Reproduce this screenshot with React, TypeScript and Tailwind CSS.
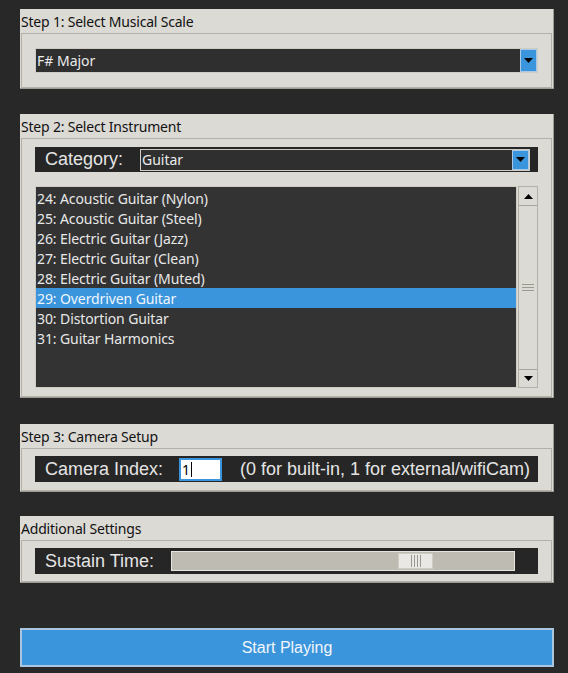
import React from 'react';

const INSTRUMENTS = [
  '24: Acoustic Guitar (Nylon)',
  '25: Acoustic Guitar (Steel)',
  '26: Electric Guitar (Jazz)',
  '27: Electric Guitar (Clean)',
  '28: Electric Guitar (Muted)',
  '29: Overdriven Guitar',
  '30: Distortion Guitar',
  '31: Guitar Harmonics',
];

const UI_FONT = "font-['Noto_Sans',sans-serif]";
const BIG_FONT = "font-['Liberation_Sans',Arial,sans-serif]";

function ArrowDown({ className = '' }: { className?: string }) {
  return (
    <svg width="9" height="5" viewBox="0 0 9 5" className={className}>
      <path d="M0 0 H9 L4.5 5 Z" fill="#000" />
    </svg>
  );
}

function ArrowUp({ className = '' }: { className?: string }) {
  return (
    <svg width="9" height="5" viewBox="0 0 9 5" className={className}>
      <path d="M0 5 H9 L4.5 0 Z" fill="#000" />
    </svg>
  );
}

function Panel({ title, children, className = '' }: { title: string; children: React.ReactNode; className?: string }) {
  return (
    <div className={`bg-[#dcdad5] border-r border-b border-[#9f9c95] ${className}`}>
      <div className={`h-[24px] flex items-center pl-[1px] text-[14px] tracking-[-0.2px] text-[#111] ${UI_FONT}`}>{title}</div>
      <div className="border border-[#b3b0a8] ml-[1px] mr-[1px]">{children}</div>
    </div>
  );
}

function Combo({ value, h }: { value: string; h: string }) {
  return (
    <div className={`flex ${h} bg-[#2f2f2f] border border-[#cfccc4]`}>
      <div className={`flex-1 flex items-center pl-[1px] text-[14px] text-[#ececec] ${UI_FONT}`}>{value}</div>
      <div className="w-[17px] bg-[#3a95dc] border border-[#a9c9e6] flex items-center justify-center">
        <ArrowDown />
      </div>
    </div>
  );
}

export default function App() {
  return (
    <div className="w-[568px] h-[673px] bg-[#282828] pl-[20px] pr-[14px] pt-[9px] flex flex-col overflow-hidden">
      <Panel title="Step 1: Select Musical Scale">
        <div className="px-[13px] pt-[14px] pb-[14px]">
          <Combo value="F# Major" h="h-[25px]" />
        </div>
      </Panel>

      <Panel title="Step 2: Select Instrument" className="mt-[25px]">
        <div className="px-[13px] pt-[8px] pb-[8px]">
          <div className="h-[25px] bg-[#262626] flex items-center pr-[8px]">
            <span className={`w-[105px] pl-[10px] text-[18px] text-[#e4e4e4] ${BIG_FONT}`}>Category:</span>
            <div className="flex-1">
              <Combo value="Guitar" h="h-[22px]" />
            </div>
          </div>
          <div className="mt-[14px] flex h-[202px]">
            <div className="flex-1 bg-[#333333] border border-[#cfccc4] py-[1px]">
              {INSTRUMENTS.map((name, i) => (
                <div
                  key={name}
                  className={`h-[20px] flex items-center pl-[1px] text-[14px] tracking-[-0.1px] ${UI_FONT} ${
                    i === 5 ? 'bg-[#3a95dc] text-[#f0f6fc]' : 'text-[#e8e8e8]'
                  }`}
                >
                  {name}
                </div>
              ))}
            </div>
            <div className="w-[20px] ml-[1px] border border-[#b3b0a8] flex flex-col bg-[#dcdad5]">
              <div className="h-[19px] border-b border-[#a8a59d] flex items-center justify-center">
                <ArrowUp />
              </div>
              <div className="flex-1 flex flex-col items-center justify-center gap-[2px]">
                <div className="w-[12px] h-[1px] bg-[#9c998f]" />
                <div className="w-[12px] h-[1px] bg-[#9c998f]" />
                <div className="w-[12px] h-[1px] bg-[#9c998f]" />
              </div>
              <div className="h-[18px] border-t border-[#a8a59d] flex items-center justify-center">
                <ArrowDown />
              </div>
            </div>
          </div>
        </div>
      </Panel>

      <Panel title="Step 3: Camera Setup" className="mt-[26px]">
        <div className="px-[13px] pt-[7px] pb-[8px]">
          <div className="h-[26px] bg-[#262626] flex items-center">
            <span className={`w-[144px] pl-[10px] text-[18px] text-[#e4e4e4] ${BIG_FONT}`}>Camera Index:</span>
            <div className="w-[43px] h-[23px] bg-white border-2 border-[#3a95dc] flex items-center pl-[1px]">
              <span className={`text-[14px] text-black ${UI_FONT}`}>1</span>
              <span className="w-[1px] h-[15px] bg-black ml-[1px]" />
            </div>
            <span className={`ml-[18px] text-[18px] text-[#e4e4e4] ${BIG_FONT}`}>(0 for built-in, 1 for external/wifiCam)</span>
          </div>
        </div>
      </Panel>

      <Panel title="Additional Settings" className="mt-[24px]">
        <div className="px-[13px] pt-[7px] pb-[7px]">
          <div className="h-[26px] bg-[#262626] flex items-center">
            <span className={`w-[136px] pl-[10px] text-[18px] text-[#e4e4e4] ${BIG_FONT}`}>Sustain Time:</span>
            <div className="w-[344px] h-[20px] bg-[#bebbb2] border border-[#e6e4df] flex items-center">
              <div className="ml-[226px] w-[35px] h-[16px] bg-[#eae8e4] border border-[#cfccc4] flex items-center justify-center gap-[2px]">
                <div className="w-[1px] h-[12px] bg-[#9c998f]" />
                <div className="w-[1px] h-[12px] bg-[#9c998f]" />
                <div className="w-[1px] h-[12px] bg-[#9c998f]" />
                <div className="w-[1px] h-[12px] bg-[#9c998f]" />
              </div>
            </div>
          </div>
        </div>
      </Panel>

      <button
        className={`mt-[45px] h-[39px] w-full bg-[#3a95dc] border-2 border-[#a9c6de] text-[16px] text-[#f2f6fa] ${BIG_FONT}`}
      >
        Start Playing
      </button>
    </div>
  );
}
